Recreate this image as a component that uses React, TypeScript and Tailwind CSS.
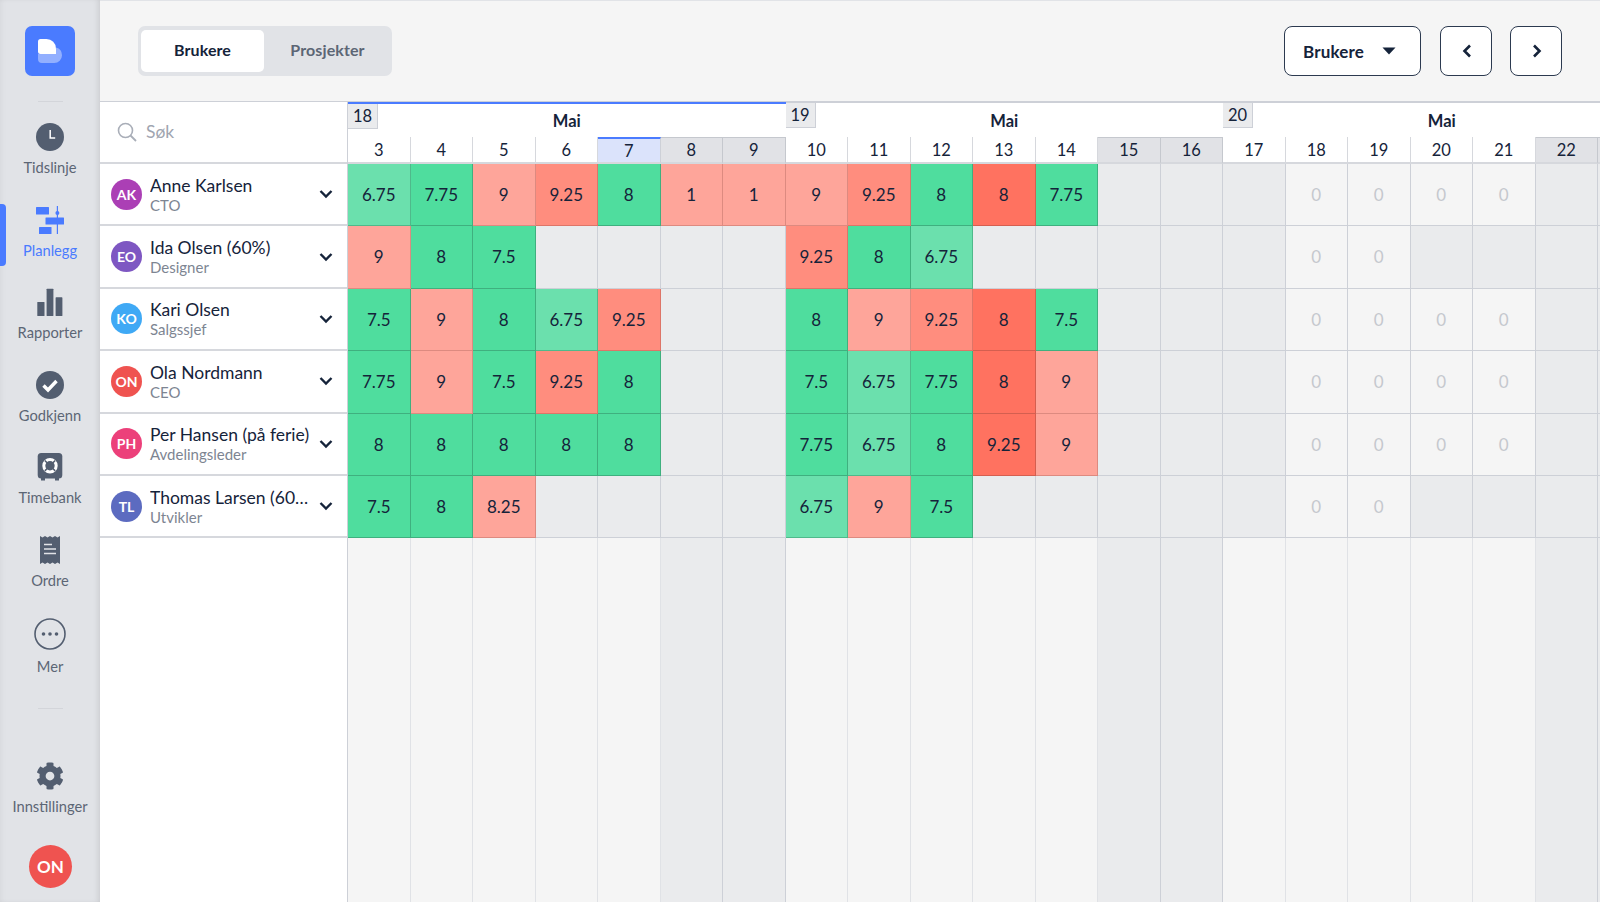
import React from "react";
import { FaCog } from "react-icons/fa";

type C = "g" | "l" | "r" | "m" | "s" | "e" | "z";
const bg: Record<C, string> = {
  g: "bg-[#4fdd9e] border-r-[#3fb07f] border-b-[#3fb07f]",
  l: "bg-[#6be0ad] border-r-[#4fb98b] border-b-[#4fb98b]",
  r: "bg-[#fea59a] border-r-[#dd8a80] border-b-[#dd8a80]",
  m: "bg-[#ff8d7e] border-r-[#dd7568] border-b-[#dd7568]",
  s: "bg-[#ff7260] border-r-[#d45f50] border-b-[#d45f50]",
  e: "bg-[#eaebed] border-r-[#cdd0d7] border-b-[#cdd0d7]",
  z: "bg-[#f5f5f5] border-r-[#cdd0d7] border-b-[#cdd0d7] text-[#c5c8ce]",
};
type Cell = [string, C] | null;
const g = (v: string): Cell => [v, "g"];
const l = (v: string): Cell => [v, "l"];
const r = (v: string): Cell => [v, "r"];
const m = (v: string): Cell => [v, "m"];
const s = (v: string): Cell => [v, "s"];
const _ = null;
const z: Cell = ["0", "z"];

const rows: Cell[][] = [
  [l("6.75"), g("7.75"), r("9"), m("9.25"), g("8"), r("1"), r("1"), r("9"), m("9.25"), g("8"), s("8"), g("7.75"), _, _, _, z, z, z, z, _, _],
  [r("9"), g("8"), g("7.5"), _, _, _, _, m("9.25"), g("8"), l("6.75"), _, _, _, _, _, z, z, _, _, _, _],
  [g("7.5"), r("9"), g("8"), l("6.75"), m("9.25"), _, _, g("8"), r("9"), m("9.25"), s("8"), g("7.5"), _, _, _, z, z, z, z, _, _],
  [g("7.75"), r("9"), g("7.5"), m("9.25"), g("8"), _, _, g("7.5"), l("6.75"), g("7.75"), s("8"), r("9"), _, _, _, z, z, z, z, _, _],
  [g("8"), g("8"), g("8"), g("8"), g("8"), _, _, g("7.75"), l("6.75"), g("8"), s("9.25"), r("9"), _, _, _, z, z, z, z, _, _],
  [g("7.5"), g("8"), r("8.25"), _, _, _, _, l("6.75"), r("9"), g("7.5"), _, _, _, _, _, z, z, _, _, _, _],
];

const users = [
  { i: "AK", c: "bg-[#ab3fb5]", n: "Anne Karlsen", t: "CTO" },
  { i: "EO", c: "bg-[#7e57c2]", n: "Ida Olsen (60%)", t: "Designer" },
  { i: "KO", c: "bg-[#3fa9f5]", n: "Kari Olsen", t: "Salgssjef" },
  { i: "ON", c: "bg-[#ef5350]", n: "Ola Nordmann", t: "CEO" },
  { i: "PH", c: "bg-[#ec407a]", n: "Per Hansen (på ferie)", t: "Avdelingsleder" },
  { i: "TL", c: "bg-[#5c6bc0]", n: "Thomas Larsen (60%)", t: "Utvikler" },
];

const weeks = [
  { w: 18, days: [3, 4, 5, 6, 7, 8, 9], top: "border-t-2 border-t-[#4a7bff]" },
  { w: 19, days: [10, 11, 12, 13, 14, 15, 16], top: "border-t border-t-[#cdd0d7]" },
  { w: 20, days: [17, 18, 19, 20, 21, 22, 23], top: "border-t border-t-[#cdd0d7]" },
];
const weekend = new Set([8, 9, 15, 16, 22, 23]);

const I = "#535e70";
const Clock = () => (
  <svg width="28" height="28" viewBox="0 0 28 28"><circle cx="14" cy="14" r="14" fill={I} /><path d="M14.2 7v8h5" fill="none" stroke="#fff" strokeWidth="1.5" /></svg>
);
const Plan = () => (
  <svg width="28" height="28" viewBox="0 0 28 28" fill="#4a7bff"><rect x="0" y="1" width="13" height="7.5" rx="0.5" /><rect x="9.5" y="11.5" width="18.5" height="7" rx="0.5" /><rect x="3" y="21" width="12.5" height="7" rx="0.5" /><rect x="20.8" y="0" width="1.2" height="28" /><circle cx="21.4" cy="7" r="2" /></svg>
);
const Bars = () => (
  <svg width="28" height="28" viewBox="0 0 28 28" fill={I}><rect x="1.3" y="14" width="7.2" height="14" rx="0.6" /><rect x="10.6" y="0.7" width="6.8" height="27.3" rx="0.6" /><rect x="19.6" y="9.3" width="6.8" height="18.7" rx="0.6" /></svg>
);
const Check = () => (
  <svg width="28" height="28" viewBox="0 0 28 28"><circle cx="14" cy="14" r="14" fill={I} /><path d="M7.5 14.5l4.5 4.5 8.5-9" fill="none" stroke="#fff" strokeWidth="3.4" /></svg>
);
const Bank = () => (
  <svg width="28" height="28" viewBox="0 0 28 28"><path d="M5 25h4v2.5H5zM19 25h4v2.5h-4z" fill={I} /><rect x="1.7" y="0" width="24.6" height="25.5" rx="3.5" fill={I} /><circle cx="14" cy="12.7" r="6.2" fill="none" stroke="#fff" strokeWidth="3" /><path d="M8.8 7.5l3.4 3.4M19.2 7.5l-3.4 3.4M8.8 17.9l3.4-3.4M19.2 17.9l-3.4-3.4" stroke={I} strokeWidth="1.5" /></svg>
);
const Receipt = () => (
  <svg width="28" height="30" viewBox="0 0 28 30"><path d="M4 1l2.5 1.5L9 1l2.5 1.5L14 1l2.5 1.5L19 1l2.5 1.5L24 1v28l-2.5-1.5L19 29l-2.5-1.5L14 29l-2.5-1.5L9 29l-2.5-1.5L4 29z" fill={I} /><path d="M8 9.5h8M8 14h12M8 18.5h12" stroke="#e1e3e7" strokeWidth="1.5" /></svg>
);
const More = () => (
  <svg width="32" height="32" viewBox="0 0 32 32"><circle cx="16" cy="16" r="15" fill="none" stroke={I} strokeWidth="1.6" /><circle cx="9.5" cy="16" r="1.8" fill={I} /><circle cx="16" cy="16" r="1.8" fill={I} /><circle cx="22.5" cy="16" r="1.8" fill={I} /></svg>
);
const Logo = () => (
  <svg width="50" height="50" viewBox="0 0 50 50"><path d="M13 28h18v-6.5a8 8 0 0 1 6 7.8 7.7 7.7 0 0 1-7.7 7.7H17a4 4 0 0 1-4-4z" fill="#fff" fillOpacity="0.4" /><path d="M15.5 13h6A9.5 9.5 0 0 1 31 22.5V28H15.5a2.5 2.5 0 0 1-2.5-2.5v-10a2.5 2.5 0 0 1 2.5-2.5z" fill="#fff" /></svg>
);
const Chevron = () => (
  <svg width="14" height="10" viewBox="0 0 14 10" fill="none"><path d="M1.5 2l5.5 5.5L12.5 2" stroke="#15233a" strokeWidth="2.4" /></svg>
);

function Nav({ icon, label, active }: { icon: React.ReactNode; label: string; active?: boolean }) {
  return (
    <div className="relative w-full h-[82.6px] flex flex-col items-center pt-[5px]">
      {active && <div className="absolute left-0 top-[3.4px] w-[6px] h-[62px] bg-[#4a7bff] rounded-r-[4px]" />}
      <div className="h-[28px] flex items-center justify-center">{icon}</div>
      <div className={`mt-[7px] text-[14.7px] leading-[18px] ${active ? "text-[#4a7bff]" : "text-[#5c6675]"}`}>{label}</div>
    </div>
  );
}

export default function App() {
  return (
    <div className="flex w-[1600px] h-[902px] overflow-hidden bg-white text-[#15233a] font-['Lato','Liberation_Sans',sans-serif]">
      <aside className="relative z-10 w-[100px] shrink-0 h-full flex flex-col items-center bg-[#e1e3e7] shadow-[inset_-4px_0_6px_-3px_rgba(0,0,0,0.12),inset_5px_0_6px_-4px_rgba(0,0,0,0.05)]">
        <div className="mt-[26px] w-[50px] h-[50px] rounded-[7px] bg-[#4a7bff]"><Logo /></div>
        <div className="mt-[25px] w-[25px] h-px bg-[#d3d5da]" />
        <div className="mt-[16px] w-full">
          <Nav icon={<Clock />} label="Tidslinje" />
          <Nav icon={<Plan />} label="Planlegg" active />
          <Nav icon={<Bars />} label="Rapporter" />
          <Nav icon={<Check />} label="Godkjenn" />
          <Nav icon={<Bank />} label="Timebank" />
          <Nav icon={<Receipt />} label="Ordre" />
          <div className="w-full mt-[1px] flex flex-col items-center pt-[3px]">
            <More />
            <div className="mt-[7px] text-[14.7px] leading-[18px] text-[#5c6675]">Mer</div>
          </div>
        </div>
        <div className="mt-[33px] w-[25px] h-px bg-[#d3d5da]" />
        <div className="mt-auto flex flex-col items-center">
          <FaCog size={28} color={I} />
          <div className="mt-[7px] text-[14.7px] leading-[18px] text-[#5c6675]">Innstillinger</div>
          <div className="mt-[30px] mb-[14px] ml-[1px] w-[43px] h-[43px] rounded-full bg-[#ef5350] text-white font-bold text-[17px] flex items-center justify-center">ON</div>
        </div>
      </aside>

      <main className="flex-1 min-w-0 flex flex-col">
        <header className="h-[102px] shrink-0 bg-[#f5f5f5] border-t border-t-[#e1e3e7] border-b border-b-[#cdd0d7] flex items-center justify-between pl-[38px] pr-[38px]">
          <div className="flex w-[254px] h-[50px] rounded-[7px] bg-[#e1e3e7] py-[4px] pl-[3px] pr-[4px] items-center">
            <div className="w-[123px] h-[42px] rounded-[5px] bg-white flex items-center justify-center font-bold text-[16px] tracking-[0.1px] pb-[2px]">Brukere</div>
            <div className="flex-1 flex items-center justify-center font-bold text-[16px] text-[#5c6675] tracking-[0.1px] pb-[2px] pl-[3px]">Prosjekter</div>
          </div>
          <div className="flex gap-[18px]">
            <div className="mr-[1px] w-[137px] h-[50px] rounded-[8px] border border-[#2c3a50] bg-white flex items-center pl-[18px] gap-[18px] font-bold text-[17px] tracking-[0.15px]">
              <span className="pt-[1px]">Brukere</span>
              <svg width="14" height="8" viewBox="0 0 14 8"><path d="M0.5 0.5h13L7 7.5z" fill="#15233a" /></svg>
            </div>
            <div className="w-[52px] h-[50px] rounded-[8px] border border-[#2c3a50] bg-white flex items-center justify-center pl-[2px]">
              <svg width="10" height="14" viewBox="0 0 10 14" fill="none"><path d="M8 1.5L2.5 7 8 12.5" stroke="#15233a" strokeWidth="2.6" /></svg>
            </div>
            <div className="w-[52px] h-[50px] rounded-[8px] border border-[#2c3a50] bg-white flex items-center justify-center pl-[2px]">
              <svg width="10" height="14" viewBox="0 0 10 14" fill="none"><path d="M2 1.5L7.5 7 2 12.5" stroke="#15233a" strokeWidth="2.6" /></svg>
            </div>
          </div>
        </header>

        <div className="flex-1 min-h-0 flex">
          <div className="w-[248px] shrink-0 border-r border-r-[#cdd0d7] bg-white flex flex-col">
            <div className="h-[62px] shrink-0 border-b-2 border-b-[#d6d8dd] flex items-center pl-[17px] gap-[9px]">
              <svg width="20" height="20" viewBox="0 0 20 20" fill="none"><circle cx="8.5" cy="8.5" r="7" stroke="#a9aeb8" strokeWidth="1.6" /><path d="M13.5 13.5l5.5 5.5" stroke="#a9aeb8" strokeWidth="1.8" /></svg>
              <span className="text-[17.5px] text-[#a0a5b0]">Søk</span>
            </div>
            {users.map((u) => (
              <div key={u.i} className="h-[62.4px] shrink-0 border-b-2 border-b-[#d6d8dd] flex items-center pl-[11px] pr-[14px]">
                <div className={`w-[31px] h-[31px] shrink-0 rounded-full ${u.c} text-white font-bold text-[14px] flex items-center justify-center`}>{u.i}</div>
                <div className="ml-[8px] w-[160px] min-w-0 pt-[1px]">
                  <div className="text-[17.5px] leading-[20px] truncate">{u.n}</div>
                  <div className="text-[15px] leading-[18px] text-[#7d8592]">{u.t}</div>
                </div>
                <div className="ml-auto"><Chevron /></div>
              </div>
            ))}
          </div>

          <div className="flex-1 min-w-0 overflow-hidden flex flex-col bg-[#f5f5f5]">
            <div className="h-[62px] shrink-0 flex bg-white">
              {weeks.map((w) => (
                <div key={w.w} className={`relative w-[437.5px] shrink-0 h-full flex flex-col ${w.top}`}>
                  <div className="absolute top-0 left-0 w-[30px] h-[25px] bg-[#eaebed] border-r border-b border-[#cdd0d7] flex items-center justify-center text-[16.5px]">{w.w}</div>
                  <div className="flex-1 flex items-center justify-center font-bold text-[16.5px] pt-[2px]">Mai</div>
                  <div className="h-[27px] shrink-0 flex">
                    {w.days.map((d) => (
                      <div
                        key={d}
                        className={`w-[62.5px] shrink-0 flex items-center justify-center text-[16.5px] pt-[1px] border-b-2 border-b-[#d6d8dd] ${
                          weekend.has(d)
                            ? "bg-[#e1e2e6] border-t border-t-[#c5c8ce] border-r border-r-[#c5c8ce]"
                            : d === 7
                            ? "bg-[#dbe3fb] border-t-2 border-t-[#4a7bff] border-r border-r-[#cdd0d7]"
                            : "border-r border-r-[#d6d8dd]"
                        }`}
                      >
                        {d === 23 ? "" : d}
                      </div>
                    ))}
                  </div>
                </div>
              ))}
            </div>

            <div className="flex-1 min-h-0 grid grid-cols-[repeat(21,62.5px)] grid-rows-[repeat(6,62.4px)_1fr]">
              {rows.flatMap((row, ri) =>
                row.map((c, ci) => {
                  const k: C = c ? c[1] : "e";
                  return (
                    <div key={`${ri}-${ci}`} className={`border-r border-b flex items-center justify-center text-[17px] ${bg[k]}`}>
                      {c ? c[0] : ""}
                    </div>
                  );
                })
              )}
              {Array.from({ length: 21 }).map((_x, i) => {
                const wk = [5, 6, 12, 13, 19, 20].includes(i);
                return (
                  <div key={i} className={`border-r ${wk ? "bg-[#eaebed] border-r-[#cdd0d7]" : "bg-[#f5f5f5] border-r-[#e0e2e6]"}`} />
                );
              })}
            </div>
          </div>
        </div>
      </main>
    </div>
  );
}
